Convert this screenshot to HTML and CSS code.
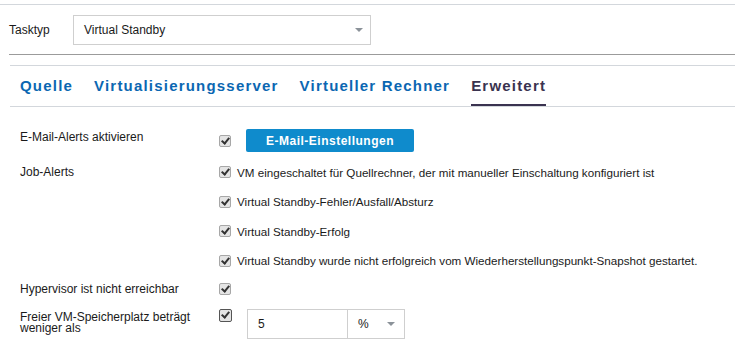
FILE: index.html
```html
<!DOCTYPE html>
<html lang="de">

<head>
    <meta charset="UTF-8">
    <title>Virtual Standby - Erweitert</title>
    <link rel="stylesheet" href="styles.css">
</head>

<body>
    <div class="top-rule"></div>
    <div class="task-row">
        <label class="task-label">Tasktyp</label>
        <div class="select task-select">
            <span>Virtual Standby</span>
            <span class="caret"></span>
        </div>
    </div>
    <div class="sep"></div>
    <div class="tabs">
        <a class="tab" href="#">Quelle</a>
        <a class="tab" href="#">Virtualisierungsserver</a>
        <a class="tab" href="#">Virtueller Rechner</a>
        <a class="tab active" href="#">Erweitert</a>
    </div>

    <div class="form">
        <div class="row">
            <div class="label">E-Mail-Alerts aktivieren</div>
            <div class="field field-mail">
                <span class="check"></span>
                <button class="btn" type="button">E-Mail-Einstellungen</button>
            </div>
        </div>
        <div class="row">
            <div class="label">Job-Alerts</div>
            <div class="field list">
                <div class="item"><span class="check"></span>VM eingeschaltet für Quellrechner, der mit manueller Einschaltung konfiguriert ist</div>
                <div class="item"><span class="check"></span>Virtual Standby-Fehler/Ausfall/Absturz</div>
                <div class="item"><span class="check"></span>Virtual Standby-Erfolg</div>
                <div class="item"><span class="check"></span>Virtual Standby wurde nicht erfolgreich vom Wiederherstellungspunkt-Snapshot gestartet.</div>
            </div>
        </div>
        <div class="row">
            <div class="label">Hypervisor ist nicht erreichbar</div>
            <div class="field list">
                <div class="item"><span class="check"></span></div>
            </div>
        </div>
        <div class="row">
            <div class="label label-wrap">Freier VM-Speicherplatz beträgt weniger als</div>
            <div class="field field-space">
                <span class="check check-dark"></span>
                <div class="input">5</div>
                <div class="select unit-select">
                    <span>%</span>
                    <span class="caret"></span>
                </div>
            </div>
        </div>
    </div>
</body>

</html>
```

FILE: styles.css
```css
body {
    font-family: 'Liberation Sans', Arial, 'Noto Sans CJK JP', sans-serif;
    font-size: 12px;
    color: #1a1a1a;
    background: #fff;
    margin: 0;
    padding: 0;
}

.top-rule {
    margin-top: 4px;
    height: 1px;
    background: #d3d7dc;
}

.task-row {
    display: flex;
    align-items: center;
    padding: 10px 0 0 9px;
}

.task-label {
    width: 64px;
}

.select {
    display: flex;
    align-items: center;
    justify-content: space-between;
    box-sizing: border-box;
    border: 1px solid #cfcfcf;
    background: #fff;
}

.task-select {
    width: 298px;
    height: 30px;
    padding: 0 7px 0 10px;
}

.caret {
    width: 0;
    height: 0;
    border-left: 4px solid transparent;
    border-right: 4px solid transparent;
    border-top: 4px solid #8b9299;
}

.sep {
    margin: 9px 0 0 9px;
    height: 1px;
    background: #9b9b9b;
}

.tabs {
    display: flex;
    gap: 21px;
    margin: 10px 0 0 10px;
    padding-left: 10px;
    border-top: 1px solid #d3d7dc;
    border-bottom: 1px solid #d3d7dc;
}

.tab {
    display: block;
    padding: 13px 0 12px 0;
    font-size: 15px;
    font-weight: bold;
    letter-spacing: 1.2px;
    line-height: 13px;
    color: #0b67b2;
    text-decoration: none;
    border-bottom: 2px solid transparent;
}

.tab.active {
    color: #3a3350;
    border-bottom-color: #3a3350;
}

.form {
    padding: 22px 0 0 20px;
    display: flex;
    flex-direction: column;
    gap: 12px;
}

.row {
    display: flex;
    align-items: flex-start;
}

.label {
    width: 199px;
    flex: none;
    line-height: 16px;
}

.label-wrap {
    width: 190px;
    margin-right: 9px;
    line-height: 11.5px;
    padding-top: 3px;
}

.check {
    display: inline-block;
    flex: none;
    box-sizing: border-box;
    width: 12px;
    height: 12px;
    border: 1px solid #a7a7a7;
    border-radius: 2px;
    background: #e4e4e4;
    position: relative;
}

.check::after {
    content: "";
    position: absolute;
    left: 3px;
    top: 0px;
    width: 3px;
    height: 6px;
    border-right: 2px solid #333;
    border-bottom: 2px solid #333;
    transform: rotate(40deg);
}

.check-dark {
    width: 13px;
    height: 13px;
    border-color: #555;
}

.field-mail {
    display: flex;
    align-items: center;
    gap: 15px;
    height: 23px;
}

.btn {
    width: 168px;
    height: 23px;
    border: none;
    border-radius: 2px;
    background: #0f8bcc;
    color: #fff;
    font-family: inherit;
    font-size: 12px;
    font-weight: bold;
    letter-spacing: 0.5px;
    padding: 0;
    cursor: pointer;
}

.list {
    display: flex;
    flex-direction: column;
    gap: 13.5px;
}

.item {
    display: flex;
    align-items: center;
    gap: 6px;
    height: 16px;
    font-size: 11.65px;
    white-space: nowrap;
}

.field-space {
    display: flex;
    align-items: flex-start;
}

.input {
    box-sizing: border-box;
    width: 101px;
    height: 30px;
    margin-left: 15px;
    padding: 0 10px;
    border: 1px solid #cfcfcf;
    line-height: 28px;
}

.unit-select {
    width: 57px;
    height: 30px;
    padding: 0 9px 0 10px;
    border-left: none;
}
```
